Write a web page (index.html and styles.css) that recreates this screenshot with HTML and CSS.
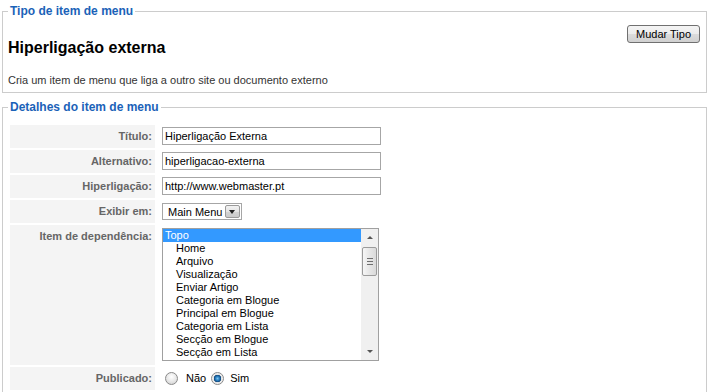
FILE: index.html
```html
<!DOCTYPE html>
<html lang="pt">
<head>
    <meta charset="UTF-8">
    <title>Item de menu</title>
    <link rel="stylesheet" href="styles.css">
</head>
<body>
    <fieldset class="panel type-panel">
        <legend>Tipo de item de menu</legend>
        <button type="button" class="btn">Mudar Tipo</button>
        <h2 class="type-title">Hiperligação externa</h2>
        <p class="type-desc">Cria um item de menu que liga a outro site ou documento externo</p>
    </fieldset>

    <fieldset class="panel details-panel">
        <legend>Detalhes do item de menu</legend>
        <table class="admintable">
            <tr>
                <td class="key">Título:</td>
                <td class="value"><input class="text" type="text" value="Hiperligação Externa"></td>
            </tr>
            <tr>
                <td class="key">Alternativo:</td>
                <td class="value"><input class="text" type="text" value="hiperligacao-externa"></td>
            </tr>
            <tr>
                <td class="key">Hiperligação:</td>
                <td class="value"><input class="text" type="text" value="http://www.webmaster.pt"></td>
            </tr>
            <tr>
                <td class="key">Exibir em:</td>
                <td class="value">
                    <div class="dropdown"><span>Main Menu</span><span class="drop-btn"></span></div>
                </td>
            </tr>
            <tr>
                <td class="key key-top">Item de dependência:</td>
                <td class="value value-list">
                    <div class="listbox">
                        <ul class="options">
                            <li class="selected">Topo</li>
                            <li class="child">Home</li>
                            <li class="child">Arquivo</li>
                            <li class="child">Visualização</li>
                            <li class="child">Enviar Artigo</li>
                            <li class="child">Categoria em Blogue</li>
                            <li class="child">Principal em Blogue</li>
                            <li class="child">Categoria em Lista</li>
                            <li class="child">Secção em Blogue</li>
                            <li class="child">Secção em Lista</li>
                        </ul>
                        <div class="scrollbar">
                            <span class="arrow arrow-up"></span>
                            <span class="track"><span class="thumb"></span></span>
                            <span class="arrow arrow-down"></span>
                        </div>
                    </div>
                </td>
            </tr>
            <tr>
                <td class="key">Publicado:</td>
                <td class="value value-radio">
                    <label class="radio"><span class="radio-mark"></span>Não</label>
                    <label class="radio"><span class="radio-mark checked"></span>Sim</label>
                </td>
            </tr>
        </table>
    </fieldset>
</body>
</html>
```

FILE: styles.css
```css
body {
    margin: 4px 0 0;
    font-family: "Liberation Sans", Arial, sans-serif;
    font-size: 11px;
    color: #333;
    background: #fff;
}

.panel {
    margin: 0 7px 0 2px;
    padding: 7px 5px 5px;
    border: 1px solid #ccc;
}

.panel legend {
    padding: 0 2px;
    color: #1b62b8;
    font-size: 12px;
    line-height: 14px;
    font-weight: bold;
}

.btn {
    float: right;
    margin-right: 1px;
    width: 73px;
    height: 18px;
    padding: 0;
    border: 1px solid #707070;
    border-radius: 3px;
    background: linear-gradient(#f4f4f4, #ececec 50%, #dcdcdc 50%, #d0d0d0);
    font-family: "Liberation Sans", Arial, sans-serif;
    font-size: 11px;
    color: #000;
}

.type-title {
    margin: 13px 0 0;
    font-size: 16px;
    line-height: 19px;
    font-weight: bold;
    color: #000;
}

.type-desc {
    margin: 17px 0 0;
    line-height: 13px;
    color: #333;
}

.details-panel {
    margin-top: 7px;
    padding-top: 9px;
}

.admintable {
    border-spacing: 2px;
    margin: 0;
}

.admintable td {
    padding: 0;
}

.admintable td.key {
    width: 142px;
    padding-right: 3px;
    background: #f4f4f4;
    text-align: right;
    vertical-align: middle;
    font-weight: bold;
    color: #666;
    line-height: 13px;
}

.admintable td.key-top {
    vertical-align: top;
    padding-top: 5px;
}

.admintable td.value {
    padding: 2px 5px 3px;
}

.admintable td.value-list {
    padding: 3px 5px 4px;
}

.text {
    display: block;
    box-sizing: border-box;
    width: 219px;
    height: 18px;
    margin: 0;
    padding: 0 2px;
    border: 1px solid #a6a6a6;
    font-family: "Liberation Sans", Arial, sans-serif;
    font-size: 11px;
    color: #000;
}

.dropdown {
    display: flex;
    align-items: center;
    box-sizing: border-box;
    width: 80px;
    height: 17px;
    margin-top: 1px;
    padding-left: 5px;
    border: 1px solid #a6a6a6;
    color: #000;
}

.drop-btn {
    position: relative;
    box-sizing: border-box;
    width: 15px;
    height: 13px;
    margin: 0 1px 0 auto;
    border: 1px solid #9a9a9a;
    border-radius: 2px;
    background: linear-gradient(#f2f2f2, #e4e4e4 50%, #d4d4d4 50%, #cacaca);
}

.drop-btn::after {
    content: "";
    position: absolute;
    left: 3px;
    top: 4px;
    border-left: 3.5px solid transparent;
    border-right: 3.5px solid transparent;
    border-top: 4px solid #222;
}

.listbox {
    display: flex;
    box-sizing: border-box;
    width: 217px;
    height: 133px;
    border: 1px solid #a0a0a0;
    color: #000;
}

.options {
    flex: 1;
    margin: 0;
    padding: 0;
    list-style: none;
}

.options li {
    height: 13px;
    line-height: 13px;
    padding-left: 2px;
    white-space: nowrap;
}

.options li.child {
    padding-left: 13px;
}

.options li.selected {
    background: #3399ff;
    color: #fff;
}

.scrollbar {
    display: flex;
    flex-direction: column;
    width: 17px;
    background: #f0f0f0;
}

.arrow {
    display: flex;
    align-items: center;
    justify-content: center;
    height: 17px;
}

.arrow::before {
    content: "";
    border-left: 3.5px solid transparent;
    border-right: 3.5px solid transparent;
}

.arrow-up::before {
    border-bottom: 3px solid #555;
}

.arrow-down::before {
    border-top: 3px solid #555;
}

.track {
    flex: 1;
    padding-top: 1px;
}

.thumb {
    display: flex;
    align-items: center;
    justify-content: center;
    box-sizing: border-box;
    height: 29px;
    margin: 0 1px;
    border: 1px solid #9b9b9b;
    border-radius: 2px;
    background: linear-gradient(90deg, #f6f6f6, #e6e6e6 50%, #dadada);
}

.thumb::before {
    content: "";
    width: 6px;
    height: 7px;
    background: repeating-linear-gradient(#6e6e6e 0 1px, transparent 1px 3px);
}

.value-radio {
    color: #000;
}

.radio {
    display: inline-flex;
    align-items: center;
    line-height: 18px;
}

.radio-mark {
    box-sizing: border-box;
    width: 13px;
    height: 13px;
    margin: 0 8px 0 3px;
    border: 1px solid #8a8a8a;
    border-radius: 50%;
    background: radial-gradient(circle at 50% 35%, #ffffff, #e6e6e6 55%, #c9c9c9);
}

.radio-mark.checked {
    margin-left: 2px;
    margin-right: 6px;
    background: radial-gradient(circle, #7cc4ef 0, #2a7fc0 2px, #10467a 3.5px, #e4e4e4 4px, #f4f4f4 6px);
}
```
